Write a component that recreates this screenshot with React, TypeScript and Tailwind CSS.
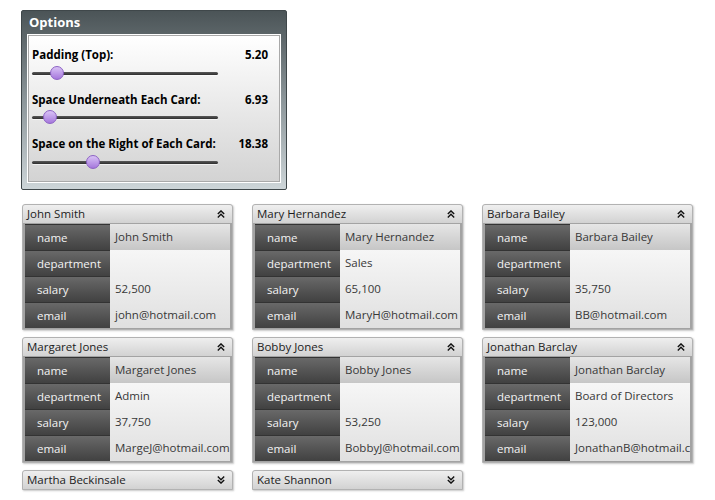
import React from "react";

type Person = { name: string; department: string; salary: string; email: string; open: boolean };

const people: Person[] = [
  { name: "John Smith", department: "", salary: "52,500", email: "john@hotmail.com", open: true },
  { name: "Mary Hernandez", department: "Sales", salary: "65,100", email: "MaryH@hotmail.com", open: true },
  { name: "Barbara Bailey", department: "", salary: "35,750", email: "BB@hotmail.com", open: true },
  { name: "Margaret Jones", department: "Admin", salary: "37,750", email: "MargeJ@hotmail.com", open: true },
  { name: "Bobby Jones", department: "", salary: "53,250", email: "BobbyJ@hotmail.com", open: true },
  { name: "Jonathan Barclay", department: "Board of Directors", salary: "123,000", email: "JonathanB@hotmail.com", open: true },
  { name: "Martha Beckinsale", department: "", salary: "", email: "", open: false },
  { name: "Kate Shannon", department: "", salary: "", email: "", open: false },
];

function Chevrons({ up }: { up: boolean }) {
  return (
    <svg width="8" height="8" viewBox="0 0 8 8" className="shrink-0">
      {up ? (
        <g fill="none" stroke="#111" strokeWidth="1.4">
          <polyline points="0.8,4 4,0.9 7.2,4" />
          <polyline points="0.8,7.4 4,4.3 7.2,7.4" />
        </g>
      ) : (
        <g fill="none" stroke="#111" strokeWidth="1.4">
          <polyline points="0.8,0.6 4,3.7 7.2,0.6" />
          <polyline points="0.8,4 4,7.1 7.2,4" />
        </g>
      )}
    </svg>
  );
}

function Slider({ label, value, thumb }: { label: string; value: string; thumb: string }) {
  return (
    <div className="flex flex-col">
      <div className="flex h-[16px] items-center justify-between text-[11.5px] font-bold leading-none text-black">
        <span>{label}</span>
        <span>{value}</span>
      </div>
      <div className="mt-[3px] flex h-[14px] items-center">
        <div className="relative h-[3px] w-[186px] rounded-full bg-gradient-to-b from-[#5a5a5a] to-[#2e2e2e] shadow-[0_1px_0_rgba(255,255,255,0.6)]">
          <div
            className={`absolute top-[-6px] h-[14px] w-[14px] rounded-full border border-[#8c62c4] bg-gradient-to-b from-[#d9c2f5] to-[#a677dc] ${thumb}`}
          />
        </div>
      </div>
    </div>
  );
}

function Card({ p }: { p: Person }) {
  return (
    <div className="w-[211px] rounded-t-[3px] border border-[#b2b2b2] bg-[#d9d9d9] shadow-[1px_1px_2px_rgba(0,0,0,0.22)]">
      <div className="flex h-[18px] items-center justify-between rounded-t-[3px] bg-gradient-to-b from-[#efefef] to-[#d2d2d2] pl-[4px] pr-[7px] text-[11.5px] leading-none text-[#1c1c1c]">
        <span>{p.name}</span>
        <Chevrons up={p.open} />
      </div>
      {p.open && (
        <div className="flex border-x-2 border-y border-[#a3a3a3] text-[11.5px] leading-none">
          <div className="flex w-[85px] flex-col">
            {["name", "department", "salary", "email"].map((k) => (
              <div
                key={k}
                className="flex h-[26px] items-center border-t border-[#333333] bg-gradient-to-b from-[#696969] to-[#414141] pl-[12px] text-[#f3f3f3]"
              >
                {k}
              </div>
            ))}
          </div>
          <div className="flex w-[120px] flex-col overflow-hidden text-[#383838]">
            <div className="flex h-[26px] items-center whitespace-nowrap bg-gradient-to-b from-[#e6e6e6] to-[#c6c6c6] pl-[5px]">
              {p.name}
            </div>
            <div className="flex flex-col bg-gradient-to-b from-[#f6f6f6] to-[#e0e0e0]">
              <div className="flex h-[26px] items-center whitespace-nowrap pl-[5px]">{p.department}</div>
              <div className="flex h-[26px] items-center whitespace-nowrap pl-[5px]">{p.salary}</div>
              <div className="flex h-[26px] items-center whitespace-nowrap pl-[5px]">{p.email}</div>
            </div>
          </div>
        </div>
      )}
    </div>
  );
}

export default function App() {
  return (
    <div className="min-h-[500px] w-[715px] bg-white pl-[21px] pt-[10px] font-['Open_Sans',sans-serif]">
      <div className="flex h-[180px] w-[266px] flex-col rounded-[2px] border border-[#3f474a] bg-gradient-to-b from-[#4b5457] via-[#8c969a] to-[#cdd5d8]">
        <div className="flex h-[24px] items-center pb-[2px] pl-[7px] text-[13px] font-bold leading-none text-white">
          Options
        </div>
        <div className="mx-[6px] h-[147px] border border-[#a9a9a9] bg-gradient-to-b from-[#ffffff] to-[#d3d3d3] pl-[3px] pr-[11px] pt-[11px] ring-1 ring-white">
          <div className="flex flex-col gap-[11.5px]">
            <Slider label="Padding (Top):" value="5.20" thumb="left-[18px]" />
            <Slider label="Space Underneath Each Card:" value="6.93" thumb="left-[11px]" />
            <Slider label="Space on the Right of Each Card:" value="18.38" thumb="left-[54px]" />
          </div>
        </div>
      </div>
      <div className="mt-[14px] ml-[1px] grid grid-cols-[211px_211px_211px] items-start gap-x-[19px] gap-y-[7px]">
        {people.map((p) => (
          <Card key={p.name} p={p} />
        ))}
      </div>
    </div>
  );
}
